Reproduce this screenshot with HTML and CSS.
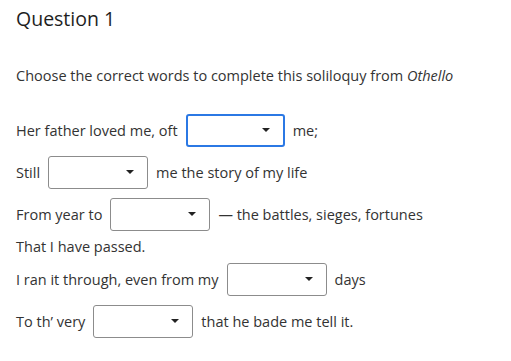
FILE: index.html
```html
<!DOCTYPE html>
<html>
<head>
    <title>Question 1</title>
    <link rel="stylesheet" href="styles.css">
</head>
<body>
    <h1 class="title">Question 1</h1>
    <p class="prompt">Choose the correct words to complete this soliloquy from <em>Othello</em></p>

    <div class="poem">
        <div class="line">
            <span>Her father loved me, oft</span>
            <span class="select focused"><span class="caret"></span></span>
            <span>me;</span>
        </div>
        <div class="line">
            <span>Still</span>
            <span class="select"><span class="caret"></span></span>
            <span>me the story of my life</span>
        </div>
        <div class="line">
            <span>From year to</span>
            <span class="select"><span class="caret"></span></span>
            <span>— the battles, sieges, fortunes</span>
        </div>
        <div class="line plain">
            <span>That I have passed.</span>
        </div>
        <div class="line">
            <span>I ran it through, even from my</span>
            <span class="select"><span class="caret"></span></span>
            <span>days</span>
        </div>
        <div class="line">
            <span>To th’ very</span>
            <span class="select"><span class="caret"></span></span>
            <span>that he bade me tell it.</span>
        </div>
    </div>
</body>
</html>
```

FILE: styles.css
```css
body {
    margin: 0;
    padding: 5px 16px 0;
    font-family: "Open Sans", "Noto Sans", sans-serif;
    color: #333;
    background: #fff;
}
.title {
    margin: 0;
    font-size: 19.5px;
    line-height: 28px;
    font-weight: 500;
    color: #1e1e1e;
}
.prompt {
    margin: 32px 0 0;
    font-size: 14.5px;
    line-height: 22px;
}
.poem {
    margin-top: 22px;
    font-size: 14.5px;
}
.line {
    display: flex;
    align-items: center;
    gap: 8px;
    height: 42px;
}
.line.plain {
    height: 23px;
}
.select {
    position: relative;
    box-sizing: border-box;
    width: 100px;
    height: 33px;
    border: 1px solid #8c8c8c;
    border-radius: 3px;
    background: #fff;
}
.select.focused {
    width: 99px;
    border: 2px solid #2b78e4;
}
.caret {
    position: absolute;
    right: 13px;
    top: 50%;
    margin-top: -2px;
    width: 0;
    height: 0;
    border-left: 4px solid transparent;
    border-right: 4px solid transparent;
    border-top: 4px solid #222;
}
```
